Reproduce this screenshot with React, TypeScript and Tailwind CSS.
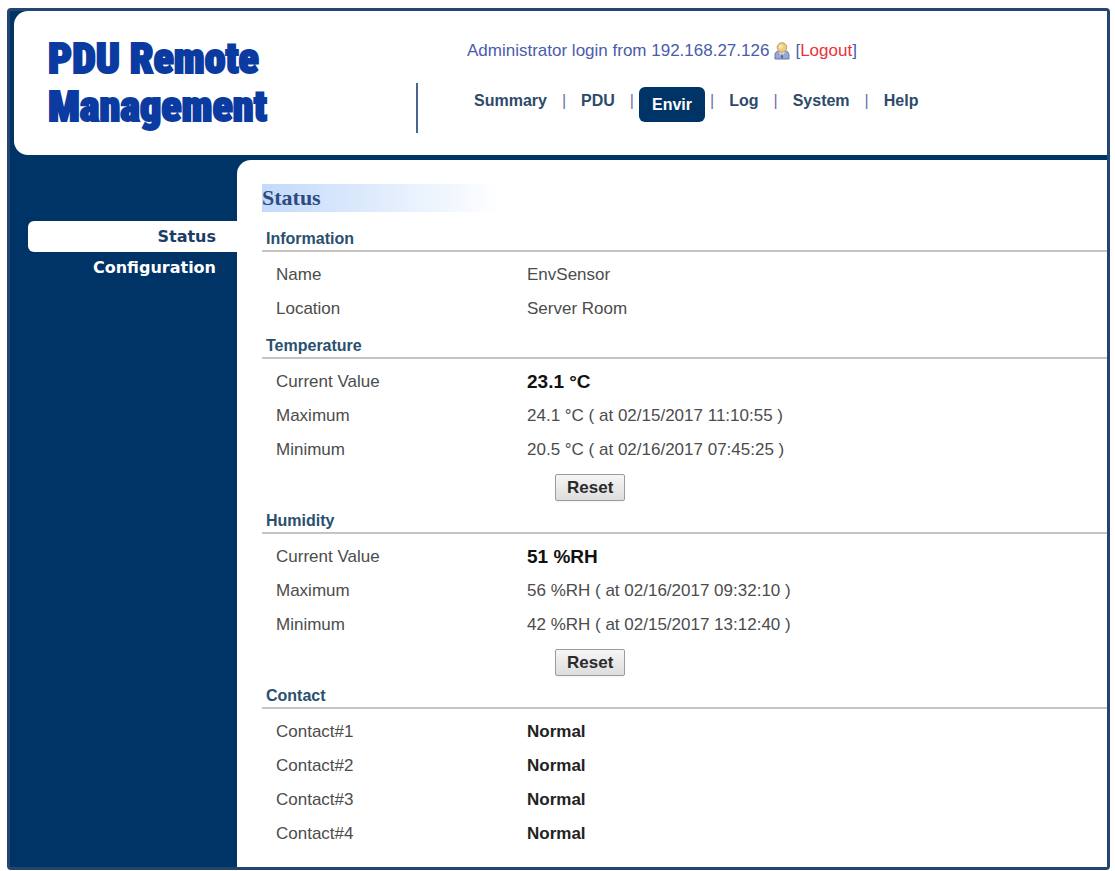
import React from 'react';
import clsx from 'clsx';

interface Row {
    label: string;
    value: string;
    style?: 'large' | 'bold';
}

interface Section {
    title: string;
    rows: Row[];
    resettable?: boolean;
}

const navItems = ['Summary', 'PDU', 'Envir', 'Log', 'System', 'Help'];
const sideItems = ['Status', 'Configuration'];

const sections: Section[] = [
    {
        title: 'Information',
        rows: [
            { label: 'Name', value: 'EnvSensor' },
            { label: 'Location', value: 'Server Room' },
        ],
    },
    {
        title: 'Temperature',
        rows: [
            { label: 'Current Value', value: '23.1 °C', style: 'large' },
            { label: 'Maximum', value: '24.1 °C ( at 02/15/2017 11:10:55 )' },
            { label: 'Minimum', value: '20.5 °C ( at 02/16/2017 07:45:25 )' },
        ],
        resettable: true,
    },
    {
        title: 'Humidity',
        rows: [
            { label: 'Current Value', value: '51 %RH', style: 'large' },
            { label: 'Maximum', value: '56 %RH ( at 02/16/2017 09:32:10 )' },
            { label: 'Minimum', value: '42 %RH ( at 02/15/2017 13:12:40 )' },
        ],
        resettable: true,
    },
    {
        title: 'Contact',
        rows: [
            { label: 'Contact#1', value: 'Normal', style: 'bold' },
            { label: 'Contact#2', value: 'Normal', style: 'bold' },
            { label: 'Contact#3', value: 'Normal', style: 'bold' },
            { label: 'Contact#4', value: 'Normal', style: 'bold' },
        ],
    },
];

const UserIcon: React.FC = () => (
    <svg width="16" height="18" viewBox="0 0 16 18" aria-hidden="true">
        <path d="M1 17v-4c0-2.4 1.6-4 4-4h6c2.4 0 4 1.6 4 4v4z" fill="#9aa9d2" stroke="#6676ac" />
        <path d="M4.5 9h7L8 14.5z" fill="#f2f4f8" />
        <path d="M8 10.5l1.2 4.5L8 17l-1.2-2z" fill="#56689f" />
        <circle cx="8" cy="5.5" r="4.8" fill="#ecca84" stroke="#c39c5a" />
        <circle cx="7" cy="4.5" r="2.2" fill="#f8e3ac" />
    </svg>
);

const Header: React.FC = () => (
    <header className="ml-1 flex rounded-l-[14px] bg-white pb-[22px]">
        <h1 className="w-[402px] shrink-0 pt-6 pl-[34px] font-[Impact,'Roboto_Condensed',Roboto,sans-serif] text-[42px] leading-12 font-black text-[#0b3ba0] [-webkit-text-stroke:2px_#0b3ba0]">
            PDU Remote
            <br />
            Management
        </h1>
        <div className="mt-[72px] h-[50px] w-[2px] shrink-0 bg-[#4a648f]" />
        <div className="ml-[41px] pt-7">
            <div className="flex items-center gap-[5px] pl-2 leading-6 whitespace-nowrap text-[#4a5cab]">
                <span>Administrator login from 192.168.27.126</span>
                <UserIcon />
                <span>
                    [<a href="#logout" className="text-[#e8323c]">Logout</a>]
                </span>
            </div>
            <nav className="mt-6 flex items-start text-base leading-7 font-bold text-[#2d4a6b]">
                {navItems.map((item, i) => (
                    <React.Fragment key={item}>
                        {i > 0 && <span className="font-normal text-[#6d6fa8]">|</span>}
                        <a
                            href={`#${item.toLowerCase()}`}
                            className={clsx(
                                item === 'Envir'
                                    ? 'mx-[5px] rounded-md bg-[#003366] px-[13px] leading-[35px] text-white'
                                    : 'px-[15px]'
                            )}
                        >
                            {item}
                        </a>
                    </React.Fragment>
                ))}
            </nav>
        </div>
    </header>
);

const Sidebar: React.FC = () => (
    <nav className="flex w-[227px] shrink-0 flex-col pt-[61px] pl-[18px] text-right font-['DejaVu_Sans',sans-serif] text-base leading-[31px] font-bold">
        {sideItems.map(item => (
            <a
                key={item}
                href={`#${item.toLowerCase()}`}
                className={clsx(
                    'rounded-l-md pr-[21px]',
                    item === 'Status' ? 'bg-white text-[#1b3d66]' : 'text-white'
                )}
            >
                {item}
            </a>
        ))}
    </nav>
);

const SectionBlock: React.FC<{ section: Section }> = ({ section }) => (
    <section>
        <h3 className="mb-[6px] border-b-2 border-[#c4c4c4] pt-2 pl-1 text-base leading-[23px] font-bold text-[#2a5070]">
            {section.title}
        </h3>
        <table className="w-full table-fixed">
            <tbody>
                {section.rows.map(row => (
                    <tr key={row.label} className="h-[34px]">
                        <th scope="row" className="w-[265px] pl-[14px] text-left font-normal">
                            {row.label}
                        </th>
                        <td
                            className={clsx(
                                row.style === 'large' && 'text-[19px] font-bold text-[#111111]',
                                row.style === 'bold' && 'font-bold text-[#222222]'
                            )}
                        >
                            {row.value}
                        </td>
                    </tr>
                ))}
            </tbody>
        </table>
        {section.resettable && (
            <div className="flex pt-[7px] pl-[293px]">
                <button
                    type="button"
                    className="rounded-xs border border-[#9c9c9c] bg-linear-to-b from-[#f6f6f6] to-[#dddddd] px-[11px] leading-[25px] font-bold text-[#2b2b2b] shadow-xs"
                >
                    Reset
                </button>
            </div>
        )}
    </section>
);

export default function App() {
    return (
        <div className="flex min-h-screen flex-col bg-white pt-2 pr-[5px] pb-px pl-[7px] font-['Liberation_Sans',Arial,sans-serif] text-[17px] text-[#4c4c4c]">
            <div className="flex flex-1 flex-col gap-[5px] rounded-sm border-3 border-[#234670] bg-[#003366]">
                <Header />
                <div className="flex flex-1">
                    <Sidebar />
                    <main className="flex-1 rounded-tl-[14px] bg-white pt-6 pl-[25px]">
                        <h2 className="mb-[7px] w-[240px] bg-linear-to-r from-[#c3dafa] to-white font-['Liberation_Serif',serif] text-[22px] leading-7 font-bold text-[#2f4a80]">
                            Status
                        </h2>
                        {sections.map(section => (
                            <SectionBlock key={section.title} section={section} />
                        ))}
                    </main>
                </div>
            </div>
        </div>
    );
}
